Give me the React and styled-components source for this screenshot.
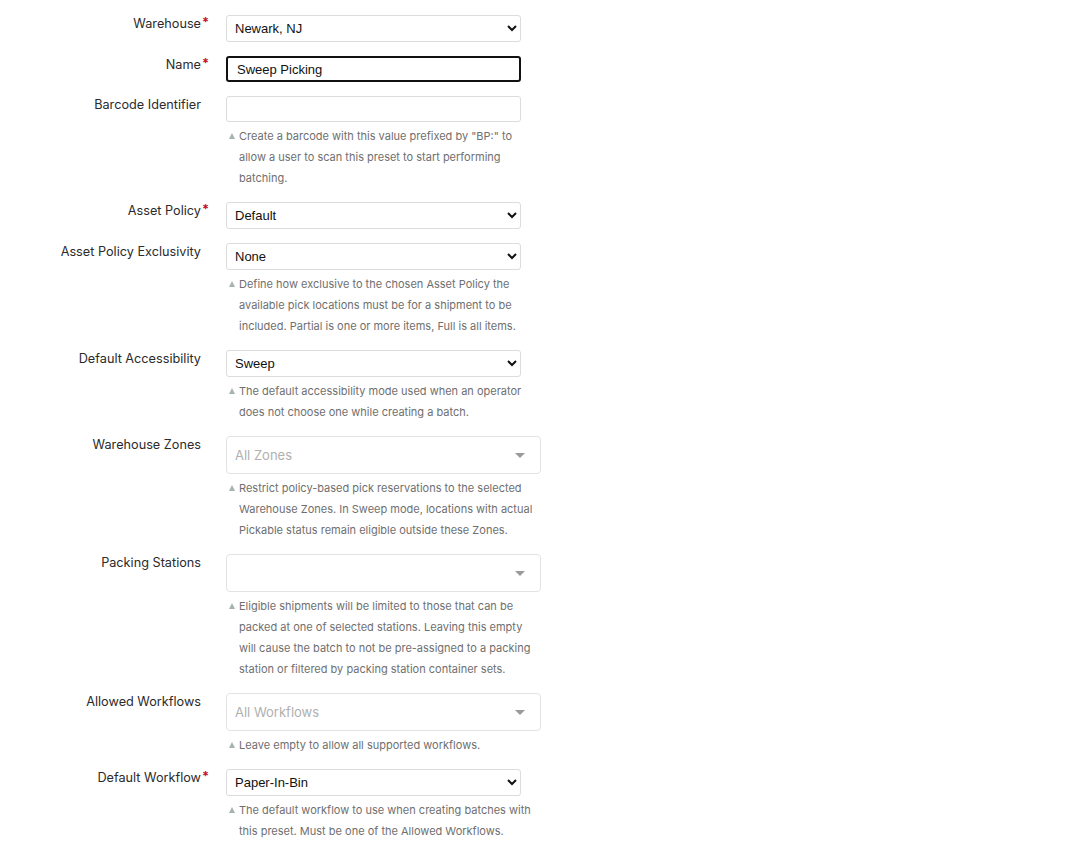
import React from "react";
import styled, { createGlobalStyle } from "styled-components";

const GlobalStyle = createGlobalStyle`
  body {
    margin: 0;
    background: #fff;
    font-family: Inter, "Noto Sans", sans-serif;
    color: #333;
  }
`;

const Form = styled.form`
  padding-top: 15px;
  display: flex;
  flex-direction: column;
  gap: 14px;
`;

const Row = styled.div`
  display: grid;
  grid-template-columns: 201px 1fr;
  column-gap: 25px;
  align-items: start;
`;

const Label = styled.label`
  position: relative;
  justify-self: end;
  font-size: 12.7px;
  line-height: 18px;
  color: #2b2b2b;
  white-space: nowrap;
`;

const Star = styled.span`
  position: absolute;
  right: -8px;
  top: -1px;
  color: #c8102e;
  font-weight: 700;
`;

const Field = styled.div`
  display: flex;
  flex-direction: column;
`;

const Select = styled.select`
  width: 295px;
  height: 27px;
  box-sizing: border-box;
  border: 1px solid #dcdcdc;
  border-radius: 3px;
  background: #fff;
  font-family: "Liberation Sans", Arial, sans-serif;
  font-size: 13px;
  color: #111;
  padding: 0 4px;
`;

const Input = styled.input`
  width: 295px;
  height: 26px;
  box-sizing: border-box;
  border: ${(p) => (p.$focused ? "2px solid #111" : "1px solid #dcdcdc")};
  border-radius: 3px;
  font-family: "Liberation Sans", Arial, sans-serif;
  font-size: 13px;
  color: #111;
  padding: 0 ${(p) => (p.$focused ? "9px" : "10px")};
  outline: none;
`;

const Multi = styled.div`
  width: 315px;
  height: 38px;
  box-sizing: border-box;
  border: 1px solid #e3e3e3;
  border-radius: 4px;
  display: flex;
  align-items: center;
  justify-content: space-between;
  padding: 0 15px 0 8px;
  font-size: 13px;
  color: #b0b0b0;
`;

const Caret = styled.span`
  width: 0;
  height: 0;
  border-left: 5px solid transparent;
  border-right: 5px solid transparent;
  border-top: 5px solid #9a9a9a;
`;

const Help = styled.div`
  position: relative;
  width: 300px;
  margin: 4px 0 -1px;
  padding-left: 13px;
  font-size: 11px;
  line-height: 21px;
  color: #6f6f6f;
  &::before {
    content: "";
    position: absolute;
    left: 3px;
    top: 7px;
    width: 0;
    height: 0;
    border-left: 3px solid transparent;
    border-right: 3px solid transparent;
    border-bottom: 6px solid #a7b3b1;
  }
`;

const fields = [
  { label: "Warehouse", required: true, kind: "select", value: "Newark, NJ" },
  { label: "Name", required: true, kind: "input", value: "Sweep Picking", focused: true },
  {
    label: "Barcode Identifier",
    kind: "input",
    value: "",
    help: 'Create a barcode with this value prefixed by "BP:" to allow a user to scan this preset to start performing batching.',
  },
  { label: "Asset Policy", required: true, kind: "select", value: "Default" },
  {
    label: "Asset Policy Exclusivity",
    kind: "select",
    value: "None",
    help: "Define how exclusive to the chosen Asset Policy the available pick locations must be for a shipment to be included. Partial is one or more items, Full is all items.",
  },
  {
    label: "Default Accessibility",
    kind: "select",
    value: "Sweep",
    help: "The default accessibility mode used when an operator does not choose one while creating a batch.",
  },
  {
    label: "Warehouse Zones",
    kind: "multi",
    value: "All Zones",
    help: "Restrict policy-based pick reservations to the selected Warehouse Zones. In Sweep mode, locations with actual Pickable status remain eligible outside these Zones.",
  },
  {
    label: "Packing Stations",
    kind: "multi",
    value: "",
    help: "Eligible shipments will be limited to those that can be packed at one of selected stations. Leaving this empty will cause the batch to not be pre-assigned to a packing station or filtered by packing station container sets.",
  },
  {
    label: "Allowed Workflows",
    kind: "multi",
    value: "All Workflows",
    help: "Leave empty to allow all supported workflows.",
  },
  {
    label: "Default Workflow",
    required: true,
    kind: "select",
    value: "Paper-In-Bin",
    help: "The default workflow to use when creating batches with this preset. Must be one of the Allowed Workflows.",
  },
];

function Control({ field }) {
  if (field.kind === "select") {
    return (
      <Select defaultValue={field.value}>
        <option>{field.value}</option>
      </Select>
    );
  }
  if (field.kind === "input") {
    return <Input defaultValue={field.value} $focused={field.focused} />;
  }
  return (
    <Multi>
      <span>{field.value}</span>
      <Caret />
    </Multi>
  );
}

function App() {
  return (
    <>
      <GlobalStyle />
      <Form onSubmit={(e) => e.preventDefault()}>
        {fields.map((field) => (
          <Row key={field.label}>
            <Label>
              {field.label}
              {field.required && <Star>*</Star>}
            </Label>
            <Field>
              <Control field={field} />
              {field.help && <Help>{field.help}</Help>}
            </Field>
          </Row>
        ))}
      </Form>
    </>
  );
}

export default App;
